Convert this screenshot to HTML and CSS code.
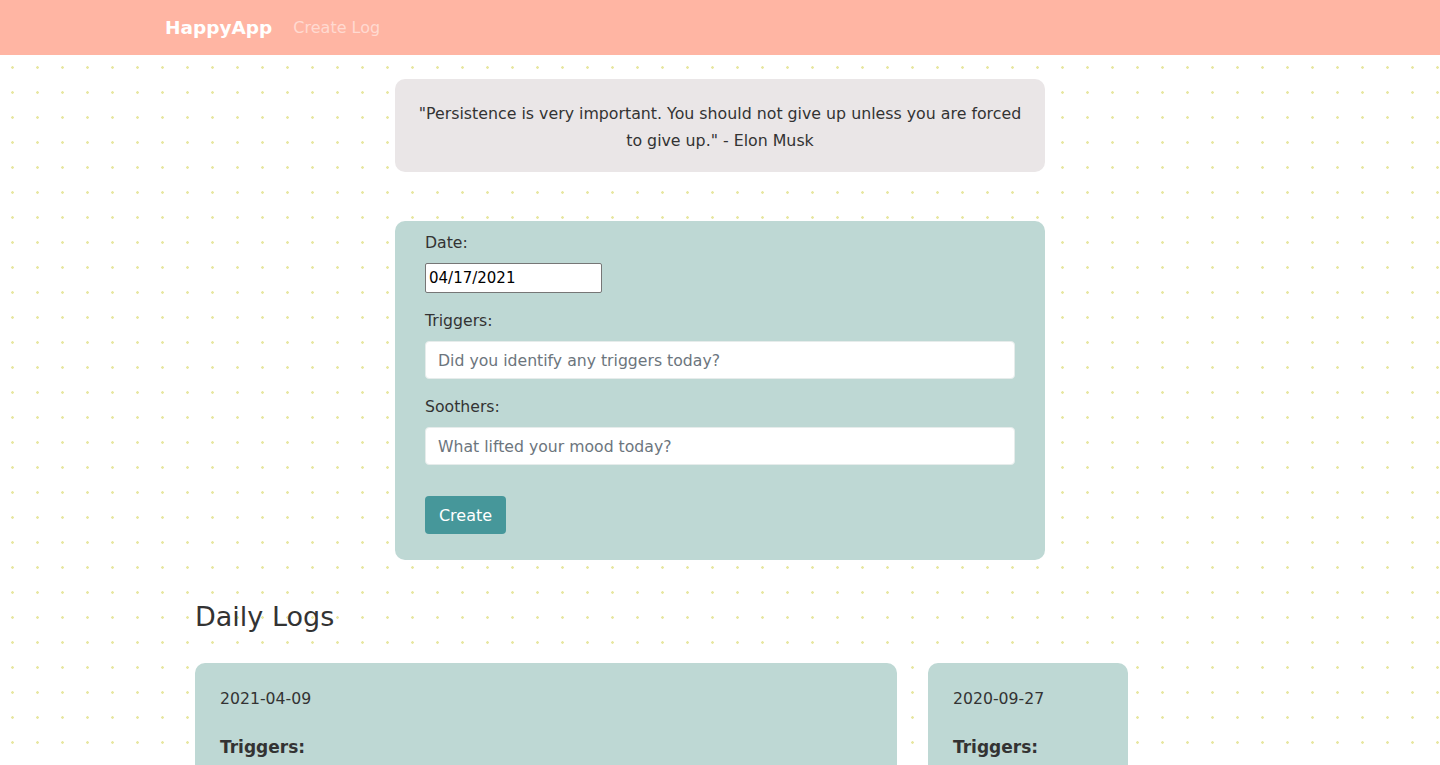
FILE: index.html
```html
<!DOCTYPE html>
<html lang="en">
<head>
<meta charset="utf-8">
<title>HappyApp</title>
<link rel="stylesheet" href="styles.css">
</head>
<body>
<nav class="navbar">
  <div class="nav-inner">
    <a class="brand" href="#">HappyApp</a>
    <a class="nav-link" href="#">Create Log</a>
  </div>
</nav>
<main class="page">
  <section class="quote">
    <p>"Persistence is very important. You should not give up unless you are forced to give up." - Elon Musk</p>
  </section>
  <form class="log-form">
    <div class="group">
      <label class="label" for="date">Date:</label>
      <input class="date-input" id="date" type="text" value="04/17/2021">
    </div>
    <div class="group">
      <label class="label" for="triggers">Triggers:</label>
      <input class="text-input" id="triggers" type="text" placeholder="Did you identify any triggers today?">
    </div>
    <div class="group">
      <label class="label" for="soothers">Soothers:</label>
      <input class="text-input" id="soothers" type="text" placeholder="What lifted your mood today?">
    </div>
    <button class="btn" type="button">Create</button>
  </form>
  <section class="logs">
    <h2 class="logs-title">Daily Logs</h2>
    <div class="cards">
      <article class="card card-wide">
        <p class="card-date">2021-04-09</p>
        <h3 class="card-label">Triggers:</h3>
        <p class="card-text">my partner went out to see his friends and I had to stay home all night alone with the dogs</p>
      </article>
      <article class="card card-narrow">
        <p class="card-date">2020-09-27</p>
        <h3 class="card-label">Triggers:</h3>
        <p class="card-text">nothing today</p>
      </article>
    </div>
  </section>
</main>
</body>
</html>
```

FILE: styles.css
```css
* { box-sizing: border-box; }
html, body { margin: 0; padding: 0; }
body {
  font-family: "DejaVu Sans", "Open Sans", sans-serif;
  font-size: 15.7px;
  color: #333;
  background-color: #fff;
  background-image: radial-gradient(circle at 12.5px 17.5px, #e8e7a2 0, #e8e7a2 1px, rgba(255,255,255,0) 1.6px);
  background-size: 25px 25px;
  height: 765px;
  overflow: hidden;
}
.navbar {
  background: #ffb5a3;
  height: 55px;
}
.nav-inner {
  width: 1140px;
  margin: 0 auto;
  padding: 0 15px;
  height: 55px;
  display: flex;
  align-items: center;
  gap: 21px;
}
.brand {
  color: #fff;
  text-decoration: none;
  font-size: 18.5px;
  font-weight: 600;
}
.nav-link {
  color: rgba(255,255,255,0.5);
  text-decoration: none;
  font-size: 16px;
}
.page {
  display: flex;
  flex-direction: column;
  align-items: center;
}
.quote {
  margin-top: 24px;
  width: 650px;
  background: #eae6e7;
  border-radius: 10px;
  padding: 21px 20px 18px;
  text-align: center;
}
.quote p {
  margin: 0;
  line-height: 27px;
  font-size: 15.8px;
}
.log-form {
  margin-top: 49px;
  width: 650px;
  background: #bed8d4;
  border-radius: 10px;
  padding: 10px 30px 26px;
}
.group { margin-bottom: 16px; }
.label {
  display: block;
  line-height: 24px;
  margin-bottom: 8px;
}
.date-input {
  display: block;
  width: 177px;
  height: 30px;
  border: 1px solid #767676;
  border-radius: 2px;
  padding: 1px 3px;
  font: inherit;
  font-size: 15px;
  color: #000;
  background: #fff;
}
.text-input {
  display: block;
  width: 100%;
  height: 38px;
  border: 1px solid #e6eceb;
  border-radius: 4px;
  padding: 6px 12px;
  font: inherit;
  color: #495057;
  background: #fff;
}
.text-input::placeholder { color: #6c757d; }
.btn {
  margin-top: 15px;
  height: 38px;
  padding: 0 12px;
  width: 81px;
  border: none;
  border-radius: 4px;
  background: #46979a;
  color: #fff;
  font: inherit;
  font-size: 16px;
}
.logs {
  width: 1080px;
  padding-left: 45px;
  margin-top: 33px;
  align-self: flex-start;
  margin-left: 150px;
}
.logs-title {
  margin: 0 0 22px;
  font-size: 27px;
  font-weight: 500;
  line-height: 48px;
}
.cards {
  display: flex;
  gap: 31px;
  align-items: flex-start;
}
.card {
  background: #bed8d4;
  border-radius: 10px;
  padding: 24px 25px;
  height: 200px;
}
.card-wide { width: 702px; }
.card-narrow { width: 200px; }
.card-date {
  margin: 0 0 24px;
  line-height: 24px;
}
.card-label {
  margin: 0;
  font-size: 17px;
  font-weight: 700;
  line-height: 24px;
}
.card-text {
  margin: 0;
  line-height: 26px;
}
```
